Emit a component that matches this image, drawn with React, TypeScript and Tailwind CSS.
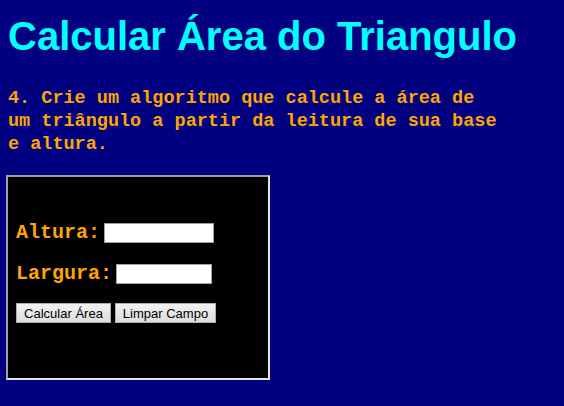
import React from 'react';

const mono = { fontFamily: '"Liberation Mono", "Courier New", monospace' };

const App = () => {
  return (
    <div className="min-h-[406px] w-full bg-[#000080] px-2 pt-[13px] pb-4 font-['Liberation_Sans',Arial,sans-serif]">
      {/* Title */}
      <h1 className="text-[40px] leading-[46px] font-bold text-[#00ffff]">
        Calcular Área do Triangulo
      </h1>

      {/* Statement */}
      <p
        className="mt-[28px] w-[492px] text-[18.5px] leading-[23px] font-bold text-[#ffa500]"
        style={mono}
      >
        4. Crie um algoritmo que calcule a área de um triângulo a partir da leitura de sua base e altura.
      </p>

      {/* Form box */}
      <div className="-ml-[2px] mt-[19px] flex h-[205px] w-[264px] flex-col border-2 border-t-[#a0a0a0] border-l-[#a0a0a0] border-r-[#e3e3e3] border-b-[#e3e3e3] bg-black px-2 pt-[46px]">
        <div className="flex h-5 items-center text-[20px] font-bold text-[#ffa500]" style={mono}>
          <span>Altura:</span>
          <input className="ml-1 h-5 w-[110px] border border-[#a0a0a0] bg-white" />
        </div>
        <div className="mt-[21px] flex h-5 items-center text-[20px] font-bold text-[#ffa500]" style={mono}>
          <span>Largura:</span>
          <input className="ml-1 h-5 w-[96px] border border-[#a0a0a0] bg-white" />
        </div>
        <div className="mt-[19px] flex gap-1">
          <button className="h-5 w-[95px] border border-[#adadad] bg-gradient-to-b from-[#f2f2f2] to-[#dddddd] text-[13px] leading-none text-black">
            Calcular Área
          </button>
          <button className="h-5 w-[101px] border border-[#adadad] bg-gradient-to-b from-[#f2f2f2] to-[#dddddd] text-[13px] leading-none text-black">
            Limpar Campo
          </button>
        </div>
      </div>
    </div>
  );
};

export default App;
